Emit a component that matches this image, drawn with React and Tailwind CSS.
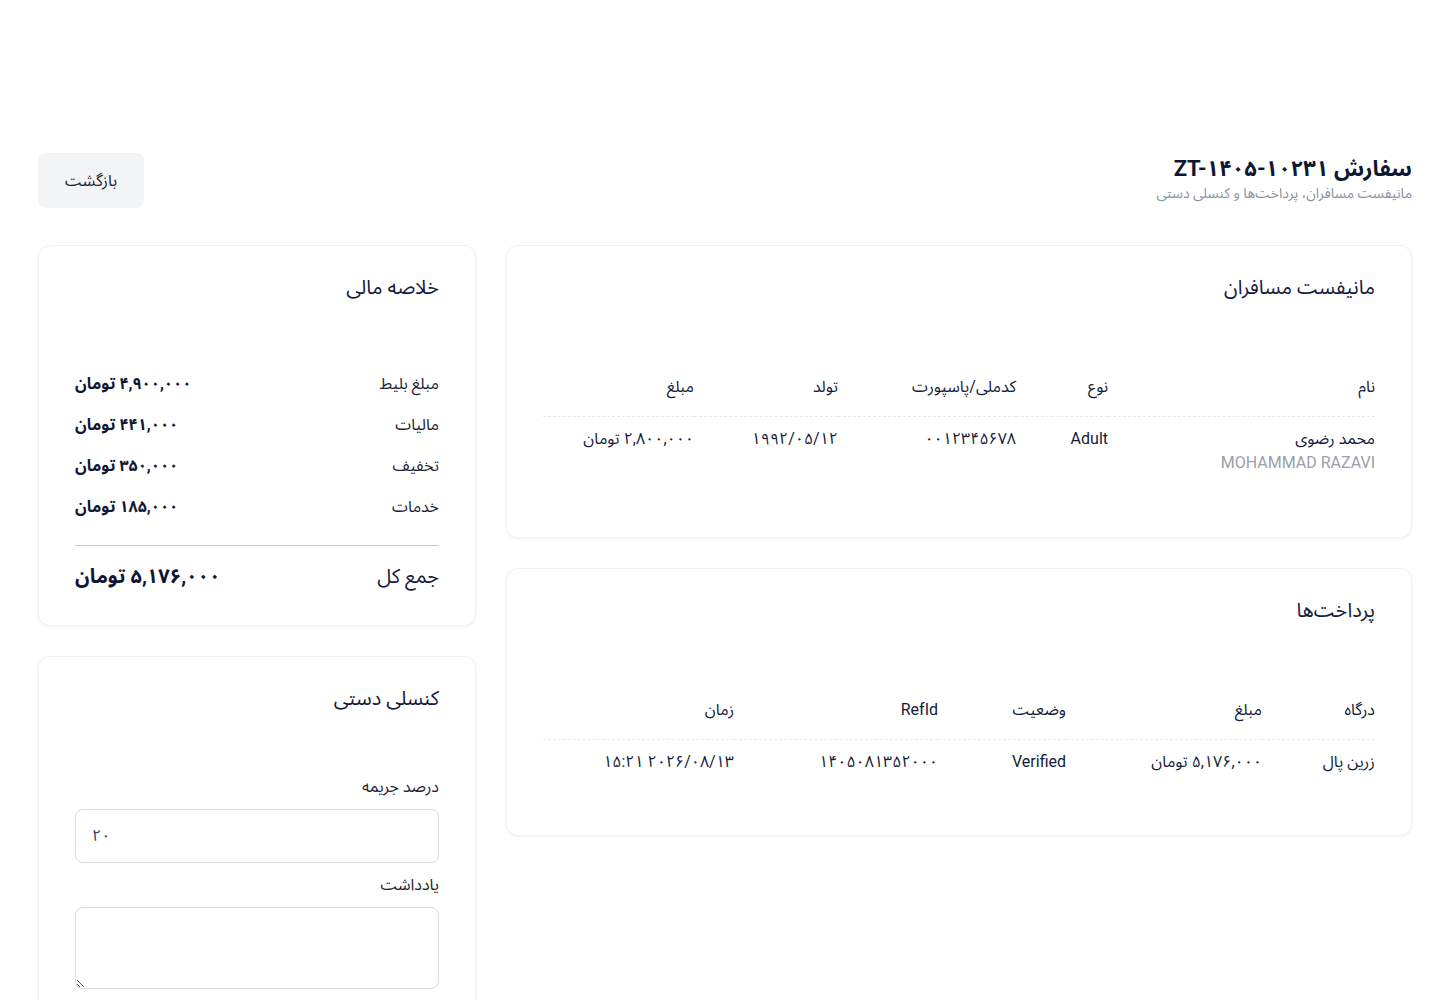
import React from 'react';

const font = { fontFamily: '"Roboto", "Noto Sans Arabic", "DejaVu Sans", sans-serif' };

const passengerCols = [
    { label: 'نام', w: 'w-[267px]' },
    { label: 'نوع', w: 'w-[92px]' },
    { label: 'کدملی/پاسپورت', w: 'w-[178px]' },
    { label: 'تولد', w: 'w-[144px]' },
    { label: 'مبلغ', w: '' },
];

const paymentCols = [
    { label: 'درگاه', w: 'w-[113px]' },
    { label: 'مبلغ', w: 'w-[196px]' },
    { label: 'وضعیت', w: 'w-[128px]' },
    { label: 'RefId', w: 'w-[204px]' },
    { label: 'زمان', w: '' },
];

const summary = [
    ['مبلغ بلیط', '۴,۹۰۰,۰۰۰ تومان'],
    ['مالیات', '۴۴۱,۰۰۰ تومان'],
    ['تخفیف', '۳۵۰,۰۰۰ تومان'],
    ['خدمات', '۱۸۵,۰۰۰ تومان'],
];

function Card({ title, children, className = '' }) {
    return (
        <div className={`bg-white border border-[#f0f1f3] rounded-xl shadow-[0_1px_3px_rgba(15,23,42,0.06)] px-9 pt-[26px] ${className}`}>
            <h2 className="text-[20px] leading-[30px] text-[#151a3b]">{title}</h2>
            {children}
        </div>
    );
}

function Table({ cols, rows }) {
    return (
        <table className="w-full table-fixed text-right text-[16px] text-[#151a3b]">
            <thead>
                <tr className="border-b border-dashed border-[#e9eaee]">
                    {cols.map((c) => (
                        <th key={c.label} className={`font-normal h-[53px] align-middle pb-1 ${c.w}`}>{c.label}</th>
                    ))}
                </tr>
            </thead>
            <tbody>{rows}</tbody>
        </table>
    );
}

export default function App() {
    return (
        <div dir="rtl" style={font} className="min-h-screen bg-white pl-[38px] pr-[28px] pt-[153px] text-[#151a3b]">
            <div className="flex items-center justify-between">
                <div className="-mt-[3px]">
                    <h1 className="text-[22px] leading-[28px] font-bold text-[#111633]">سفارش ZT-۱۴۰۵-۱۰۲۳۱</h1>
                    <p className="text-[14px] leading-[20px] text-[#8d93a1]">مانیفست مسافران، پرداخت‌ها و کنسلی دستی</p>
                </div>
                <button className="bg-[#f3f4f6] rounded-lg h-[55px] w-[106px] text-[16px] text-[#1f2433]">بازگشت</button>
            </div>

            <div className="grid grid-cols-3 gap-[30px] mt-[37px] items-start">
                <div className="col-span-2 flex flex-col gap-[30px]">
                    <Card title="مانیفست مسافران" className="h-[293px]">
                        <div className="mt-[61px]">
                            <Table
                                cols={passengerCols}
                                rows={
                                    <tr className="align-top">
                                        <td className="pt-[10px]">
                                            <div className="leading-[24px]">محمد رضوی</div>
                                            <div className="leading-[24px] text-[#9aa0ab]">MOHAMMAD RAZAVI</div>
                                        </td>
                                        <td className="pt-[10px] leading-[24px]">Adult</td>
                                        <td className="pt-[10px] leading-[24px]">۰۰۱۲۳۴۵۶۷۸</td>
                                        <td className="pt-[10px] leading-[24px]">۱۹۹۲/۰۵/۱۲</td>
                                        <td className="pt-[10px] leading-[24px]">۲,۸۰۰,۰۰۰ تومان</td>
                                    </tr>
                                }
                            />
                        </div>
                    </Card>

                    <Card title="پرداخت‌ها" className="h-[268px]">
                        <div className="mt-[61px]">
                            <Table
                                cols={paymentCols}
                                rows={
                                    <tr>
                                        <td className="pt-[10px] leading-[24px]">زرین پال</td>
                                        <td className="pt-[10px] leading-[24px]">۵,۱۷۶,۰۰۰ تومان</td>
                                        <td className="pt-[10px] leading-[24px]">Verified</td>
                                        <td className="pt-[10px] leading-[24px]">۱۴۰۵۰۸۱۳۵۲۰۰۰</td>
                                        <td className="pt-[10px] leading-[24px]">۲۰۲۶/۰۸/۱۳ ۱۵:۲۱</td>
                                    </tr>
                                }
                            />
                        </div>
                    </Card>
                </div>

                <div className="flex flex-col gap-[30px]">
                    <Card title="خلاصه مالی" className="pb-[34px]">
                        <div className="mt-[70px] flex flex-col gap-[17px]">
                            {summary.map(([k, v]) => (
                                <div key={k} className="flex items-center justify-between text-[16px] leading-[24px]">
                                    <span className="text-[#1f2433]">{k}</span>
                                    <span className="font-bold text-[#111633]">{v}</span>
                                </div>
                            ))}
                        </div>
                        <div className="border-t border-[#c9cbd0] mt-[26px] pt-[15px] flex items-center justify-between">
                            <span className="text-[20px] leading-[30px] text-[#151a3b]">جمع کل</span>
                            <span className="text-[20px] leading-[30px] font-bold text-[#111633]">۵,۱۷۶,۰۰۰ تومان</span>
                        </div>
                    </Card>

                    <Card title="کنسلی دستی" className="pb-10">
                        <label className="block mt-[62px] text-[16px] leading-[24px] text-[#1f2433]">درصد جریمه</label>
                        <input
                            dir="ltr"
                            defaultValue="۲۰"
                            className="mt-[10px] w-full h-[54px] border border-[#dadce0] rounded-lg px-4 text-[16px] text-[#3b4252] outline-none"
                        />
                        <label className="block mt-[10px] text-[16px] leading-[24px] text-[#1f2433]">یادداشت</label>
                        <textarea className="mt-[10px] w-full h-[82px] border border-[#dadce0] rounded-lg px-4 py-2 text-[16px] block outline-none" />
                    </Card>
                </div>
            </div>
        </div>
    );
}
